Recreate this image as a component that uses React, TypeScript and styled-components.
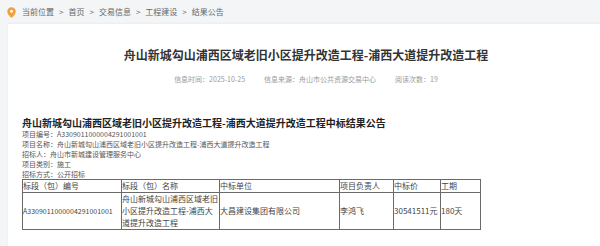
import React from "react";
import styled, { createGlobalStyle } from "styled-components";

const Global = createGlobalStyle`
  html, body { margin: 0; padding: 0; background: #f3f5f7; }
  body { font-family: "Noto Sans CJK SC", "Noto Sans", sans-serif; }
  * { box-sizing: border-box; }
`;

const Page = styled.div`
  width: 600px;
  height: 246px;
  overflow: hidden;
  display: flex;
  flex-direction: column;
  background: #f3f5f7;
`;

const TopBar = styled.div`
  height: 24px;
  flex: none;
  display: flex;
  align-items: center;
  padding-left: 7px;
  gap: 6px;
  background: #f3f5f7;
`;

const Crumbs = styled.div`
  display: flex;
  align-items: center;
  gap: 5px;
  font-size: 8px;
  line-height: 10px;
  color: #666;
`;

const Main = styled.div`
  flex: 1;
  padding-left: 8px;
  display: flex;
`;

const Card = styled.div`
  flex: 1;
  background: #fff;
  padding: 23px 0 0 14px;
  box-shadow: 0 -1px 2px rgba(0, 0, 0, 0.04);
`;

const Title = styled.h1`
  margin: 0 0 0 -14px;
  text-align: center;
  font-size: 12px;
  line-height: 16px;
  font-weight: 700;
  color: #333;
  padding-left: 4px;
`;

const Meta = styled.div`
  margin: 11px 0 0 -14px;
  padding-left: 4px;
  display: flex;
  justify-content: center;
  gap: 19px;
  font-size: 7px;
  line-height: 10px;
  color: #9a9a9a;
`;

const Heading = styled.h2`
  margin: 33px 0 0 0;
  font-size: 10px;
  line-height: 12px;
  font-weight: 700;
  color: #222;
`;

const InfoLine = styled.div`
  font-size: 7px;
  line-height: 10px;
  color: #555;
`;

const Table = styled.table`
  border-collapse: collapse;
  table-layout: fixed;
  width: 458px;
  color: #444;
  font-size: 8px;
  line-height: 12px;
`;

const Cell = styled.td<{ $w?: number; $small?: boolean }>`
  border: 1px solid #6a6a6a;
  padding: 0;
  vertical-align: middle;
  text-align: left;
  ${(p) => (p.$w ? `width: ${p.$w}px;` : "")}
  ${(p) => (p.$small ? "font-size: 7px;" : "")}
`;

const HeadRow = styled.tr`
  height: 12px;
`;

const BodyRow = styled.tr`
  height: 37px;
`;

const Pin = () => (
  <svg width="9" height="11" viewBox="0 0 9 11">
    <path
      d="M4.5 0.3C2.1 0.3 0.3 2.1 0.3 4.4c0 2.9 3.3 5.9 4.2 6.4 0.9-0.5 4.2-3.5 4.2-6.4C8.7 2.1 6.9 0.3 4.5 0.3z"
      fill="#f3a13a"
    />
    <circle cx="4.5" cy="4.3" r="1.5" fill="#fff" />
  </svg>
);

const crumbs = ["当前位置", "首页", "交易信息", "工程建设", "结果公告"];

const info = [
  "项目编号：A3309011000004291001001",
  "项目名称：舟山新城勾山浦西区域老旧小区提升改造工程-浦西大道提升改造工程",
  "招标人：舟山市新城建设管理服务中心",
  "项目类别：施工",
  "招标方式：公开招标",
];

export default function App() {
  return (
    <>
      <Global />
      <Page>
        <TopBar>
          <Pin />
          <Crumbs>
            {crumbs.map((c, i) => (
              <React.Fragment key={c}>
                {i > 0 && <span>&gt;</span>}
                <span>{c}</span>
              </React.Fragment>
            ))}
          </Crumbs>
        </TopBar>
        <Main>
          <Card>
            <Title>舟山新城勾山浦西区域老旧小区提升改造工程-浦西大道提升改造工程</Title>
            <Meta>
              <span>信息时间：2025-10-25</span>
              <span>信息来源：舟山市公共资源交易中心</span>
              <span>阅读次数：19</span>
            </Meta>
            <Heading>舟山新城勾山浦西区域老旧小区提升改造工程-浦西大道提升改造工程中标结果公告</Heading>
            {info.map((l) => (
              <InfoLine key={l}>{l}</InfoLine>
            ))}
            <Table>
              <tbody>
                <HeadRow>
                  <Cell $w={99}>标段（包）编号</Cell>
                  <Cell $w={98}>标段（包）名称</Cell>
                  <Cell $w={120}>中标单位</Cell>
                  <Cell $w={54}>项目负责人</Cell>
                  <Cell $w={47}>中标价</Cell>
                  <Cell $w={40}>工期</Cell>
                </HeadRow>
                <BodyRow>
                  <Cell $small>A3309011000004291001001</Cell>
                  <Cell>舟山新城勾山浦西区域老旧小区提升改造工程-浦西大道提升改造工程</Cell>
                  <Cell>大昌建设集团有限公司</Cell>
                  <Cell>李鸿飞</Cell>
                  <Cell>30541511元</Cell>
                  <Cell>180天</Cell>
                </BodyRow>
              </tbody>
            </Table>
          </Card>
        </Main>
      </Page>
    </>
  );
}
